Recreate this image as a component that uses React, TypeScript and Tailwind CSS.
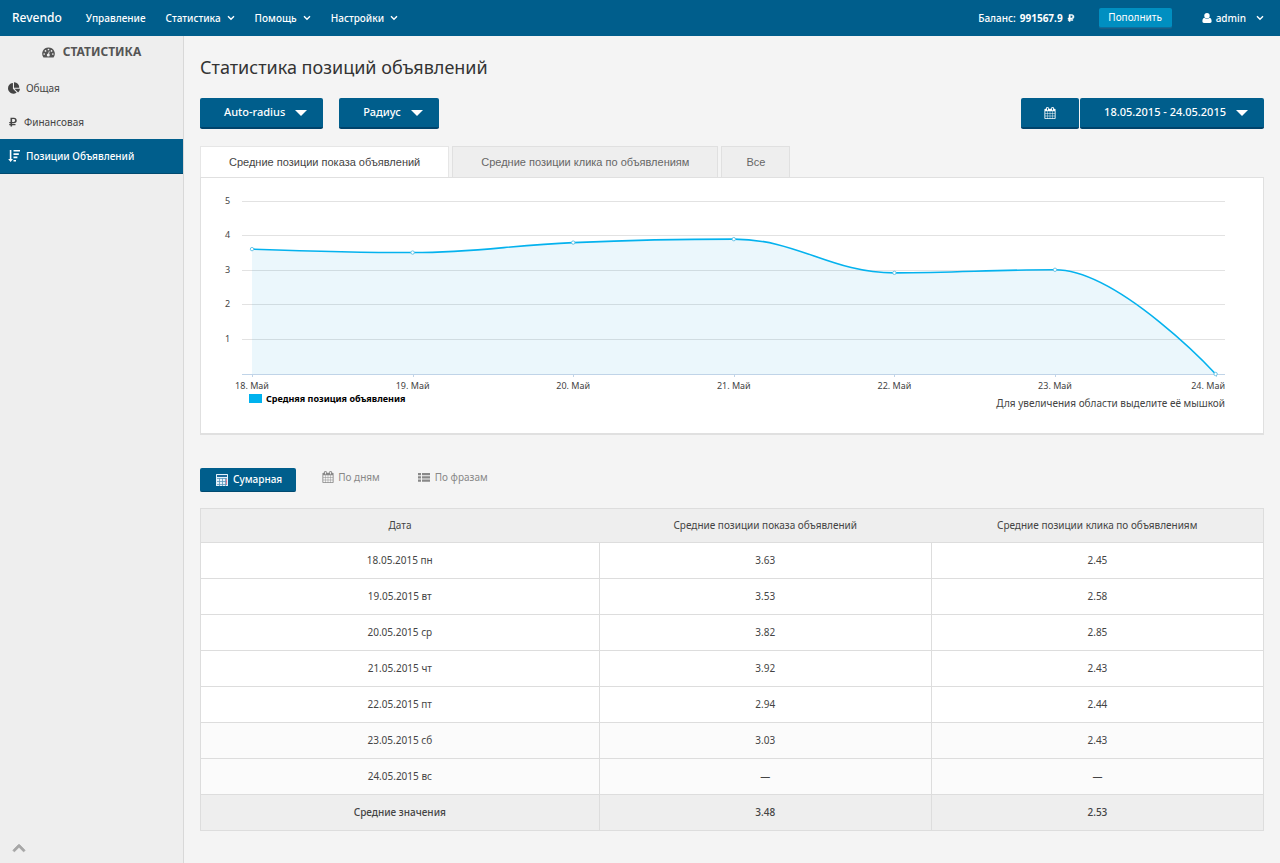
import type { ReactNode } from "react";
import { FaChartPie, FaChevronUp, FaRubleSign } from "react-icons/fa";

function ChevronIcon() {
  return (
    <svg viewBox="0 0 8 6" className="h-1.5 w-2" fill="none" stroke="currentColor" strokeWidth="1.4" aria-hidden="true">
      <path d="M1 1.2 4 4.2 7 1.2" />
    </svg>
  );
}

function CaretIcon() {
  return (
    <svg viewBox="0 0 12 6" className="h-1.5 w-3" fill="currentColor" aria-hidden="true">
      <path d="M0 0h12L6 6z" />
    </svg>
  );
}

function CalendarIcon({ className }: { className: string }) {
  return (
    <svg viewBox="0 0 1792 1792" className={className} fill="currentColor" aria-hidden="true">
      <path d="M192 1664h288v-288h-288v288zm352 0h320v-288h-320v288zm-352-352h288v-320h-288v320zm352 0h320v-320h-320v320zm-352-384h288v-288h-288v288zm736 736h320v-288h-320v288zm-384-736h320v-288h-320v288zm768 736h288v-288h-288v288zm-384-352h320v-320h-320v320zm-352-864v-288q0-13-9.5-22.5t-22.5-9.5h-64q-13 0-22.5 9.5t-9.5 22.5v288q0 13 9.5 22.5t22.5 9.5h64q13 0 22.5-9.5t9.5-22.5zm736 864h288v-320h-288v320zm-384-384h320v-288h-320v288zm384 0h288v-288h-288v288zm32-480v-288q0-13-9.5-22.5t-22.5-9.5h-64q-13 0-22.5 9.5t-9.5 22.5v288q0 13 9.5 22.5t22.5 9.5h64q13 0 22.5-9.5t9.5-22.5zm384-64v1280q0 52-38 90t-90 38h-1408q-52 0-90-38t-38-90v-1280q0-52 38-90t90-38h128v-96q0-66 47-113t113-47h64q66 0 113 47t47 113v96h384v-96q0-66 47-113t113-47h64q66 0 113 47t47 113v96h128q52 0 90 38t38 90z" />
    </svg>
  );
}

function CalculatorIcon() {
  return (
    <svg viewBox="0 0 12 12" className="size-3" aria-hidden="true">
      <rect width="12" height="12" rx="0.5" fill="#e4f1fa" />
      <rect x="1" y="1" width="10" height="2" fill="#1d6a9c" />
      <path d="M1 4.5h10M1 7.5h10M1 10.5h10M3.5 4v8M6.5 4v8M9.5 4v8" stroke="#5b98bd" strokeWidth="0.8" />
      <path d="M10.5 5v5.5" stroke="#e0607a" strokeWidth="0.8" />
    </svg>
  );
}

function DashboardIcon() {
  return (
    <svg viewBox="0 0 13 11" className="h-[11px] w-[13px]" aria-hidden="true">
      <path d="M6.5 0.5A6.2 6.2 0 0 0 1.3 10.2Q1.5 10.5 1.9 10.5H11.1Q11.5 10.5 11.7 10.2A6.2 6.2 0 0 0 6.5 0.5Z" fill="currentColor" />
      <g fill="#eee">
        <circle cx="2.2" cy="7" r="0.85" />
        <circle cx="3.5" cy="3.9" r="0.85" />
        <circle cx="6.5" cy="2.5" r="0.85" />
        <circle cx="9.5" cy="3.9" r="0.85" />
        <circle cx="10.8" cy="7" r="0.85" />
        <circle cx="6.3" cy="8" r="1.5" />
      </g>
      <path d="M6.4 7.6 7.3 4.4" stroke="#eee" strokeWidth="0.9" />
    </svg>
  );
}

function SortIcon() {
  return (
    <svg viewBox="0 0 12 12" className="size-3" fill="currentColor" aria-hidden="true">
      <path d="M1.8 0H3.4V9H5L2.6 12 0.2 9H1.8Z" />
      <path d="M5.5 0H12V1.6H5.5ZM5.5 3.3H10.8V4.9H5.5ZM5.5 6.6H9.4V8.2H5.5ZM5.5 9.9H8V11.5H5.5Z" />
    </svg>
  );
}

function UserIcon() {
  return (
    <svg viewBox="0 0 10 10" className="size-2.5" fill="currentColor" aria-hidden="true">
      <circle cx="5" cy="2.8" r="2.7" />
      <path d="M2.3 4.8C0.9 5.1 0.4 6.6 0.4 8.3 0.4 9.4 1 10 1.9 10H8.1C9 10 9.6 9.4 9.6 8.3 9.6 6.6 9.1 5.1 7.7 4.8 6.3 6.3 3.7 6.3 2.3 4.8Z" />
    </svg>
  );
}

function ListIcon() {
  return (
    <svg viewBox="0 0 12 9" className="h-[9px] w-3" fill="currentColor" aria-hidden="true">
      <path d="M0 0H3V2.2H0ZM4 0H12V2.2H4ZM0 3.3H3V5.5H0ZM4 3.3H12V5.5H4ZM0 6.6H3V8.8H0ZM4 6.6H12V8.8H4Z" />
    </svg>
  );
}

function Header() {
  return (
    <header className="flex h-9 items-center bg-[#005e8c] text-[10px] font-medium text-white">
      <a href="#" className="pl-3 text-xs">
        Revendo
      </a>
      <nav className="ml-6 flex items-center gap-5">
        <a href="#">Управление</a>
        {["Статистика", "Помощь", "Настройки"].map((label) => (
          <button key={label} type="button" className="flex items-center gap-1.5">
            {label}
            <ChevronIcon />
          </button>
        ))}
      </nav>
      <div className="ml-auto flex items-center pr-4">
        <span className="flex items-center gap-1">
          Баланс: <b>991567.9</b>
          <FaRubleSign className="size-2" strokeWidth="30" stroke="currentColor" />
        </span>
        <button
          type="button"
          className="ml-6 h-5 w-[73px] rounded-xs border-b border-[#0a6f9f] bg-[#008fc1] pb-px font-normal shadow-[0_1px_1px_#1d5f86]"
        >
          Пополнить
        </button>
        <button type="button" className="ml-[30px] flex items-center gap-1">
          <UserIcon />
          admin
          <span className="ml-1.5">
            <ChevronIcon />
          </span>
        </button>
      </div>
    </header>
  );
}

const menu: { label: string; icon: ReactNode; active?: boolean }[] = [
  { label: "Общая", icon: <FaChartPie className="size-3" /> },
  { label: "Финансовая", icon: <FaRubleSign className="size-2.5" /> },
  { label: "Позиции Объявлений", icon: <SortIcon />, active: true },
];

function Sidebar() {
  return (
    <aside className="flex w-46 shrink-0 flex-col border-r border-[#d8d8d8] bg-[#eee] text-[#444]">
      <h2 className="flex h-8 items-center justify-center gap-2 text-xs font-bold text-[#555]">
        <DashboardIcon />
        СТАТИСТИКА
      </h2>
      <nav className="mt-[3px] flex flex-col text-[10px]">
        {menu.map((item) => (
          <a
            key={item.label}
            href="#"
            className={
              item.active
                ? "flex h-[35px] items-center gap-1.5 border-b border-[#004a70] bg-[#005e8c] px-2 font-medium text-white"
                : "flex h-[34px] items-center gap-1.5 px-2"
            }
          >
            {item.icon}
            {item.label}
          </a>
        ))}
      </nav>
      <a href="#" aria-label="Наверх" className="mt-auto mb-2 ml-3 w-fit text-[#a6a6a6]">
        <FaChevronUp className="size-3.5" stroke="currentColor" strokeWidth="30" />
      </a>
    </aside>
  );
}

const buttonStyle =
  "flex h-[31px] items-center gap-2.5 rounded-xs border-b-2 border-[#00436b] bg-[#005e8c] text-[11px] font-medium text-white";

function Toolbar() {
  return (
    <div className="flex items-center">
      <button type="button" className={`${buttonStyle} pr-4 pl-6`}>
        Auto-radius
        <CaretIcon />
      </button>
      <button type="button" className={`${buttonStyle} ml-4 pr-4 pl-6`}>
        Радиус
        <CaretIcon />
      </button>
      <button type="button" aria-label="Календарь" className={`${buttonStyle} ml-auto w-[58px] justify-center`}>
        <CalendarIcon className="size-3" />
      </button>
      <button type="button" className={`${buttonStyle} ml-px pr-4 pl-6`}>
        18.05.2015 - 24.05.2015
        <CaretIcon />
      </button>
    </div>
  );
}

const points = [
  { label: "18. Май", value: 3.63 },
  { label: "19. Май", value: 3.53 },
  { label: "20. Май", value: 3.82 },
  { label: "21. Май", value: 3.92 },
  { label: "22. Май", value: 2.94 },
  { label: "23. Май", value: 3.03 },
  { label: "24. Май", value: 0 },
].map((point, i) => ({
  ...point,
  x: 51 + i * 160.6,
  y: 196 - point.value * 34.4,
}));

/* Cubic spline whose control points never overshoot the neighbouring values. */
function splinePath() {
  let path = `M${points[0].x} ${points[0].y}`;
  let outX = points[0].x;
  let outY = points[0].y;
  for (let i = 1; i < points.length; i++) {
    const { x, y } = points[i];
    const prev = points[i - 1];
    const next = points[i + 1];
    let inX = x;
    let inY = y;
    let nextX = x;
    let nextY = y;
    if (next) {
      inX = (1.5 * x + prev.x) / 2.5;
      inY = (1.5 * y + prev.y) / 2.5;
      nextX = (1.5 * x + next.x) / 2.5;
      nextY = (1.5 * y + next.y) / 2.5;
      const shift = ((nextY - inY) * (nextX - x)) / (nextX - inX) + y - nextY;
      inY += shift;
      nextY += shift;
      const clampedIn = Math.min(Math.max(inY, Math.min(prev.y, y)), Math.max(prev.y, y));
      if (clampedIn !== inY) {
        inY = clampedIn;
        nextY = 2 * y - inY;
      }
      const clampedNext = Math.min(Math.max(nextY, Math.min(next.y, y)), Math.max(next.y, y));
      if (clampedNext !== nextY) {
        nextY = clampedNext;
        inY = 2 * y - nextY;
      }
    }
    path += `C${outX} ${outY} ${inX} ${inY} ${x} ${y}`;
    outX = nextX;
    outY = nextY;
  }
  return path;
}

function Chart() {
  const line = splinePath();
  const last = points[points.length - 1];
  return (
    <svg viewBox="0 0 1062 214" className="h-auto w-full" role="img" aria-label="Средняя позиция объявления">
      {[1, 2, 3, 4, 5].map((n) => (
        <g key={n}>
          <path d={`M41 ${Math.round(196 - n * 34.4) - 0.5}H1024`} stroke="#e2e2e2" />
          <text x="24" y={Math.round(196 - n * 34.4) + 2} className="fill-[#444] text-[9px]">
            {n}
          </text>
        </g>
      ))}
      <path d={`${line}V196H${points[0].x}Z`} fill="#0096d8" fillOpacity="0.08" />
      <path d="M41 196.5H1024" stroke="#c0d4e8" />
      <path d={line} fill="none" stroke="#04b2ee" strokeWidth="1.6" shapeRendering="geometricPrecision" />
      {points.map((point) => (
        <g key={point.label}>
          <path d={`M${Math.round(point.x) + 0.5} 196v3`} stroke="#c0d4e8" />
          <circle cx={point.x} cy={point.y} r="1.7" fill="#fff" stroke="#5ec0e4" strokeWidth="0.9" />
          <text
            x={point === last ? 1024 : point.x}
            y="211"
            textAnchor={point === last ? "end" : "middle"}
            className="fill-[#444] text-[9px]"
          >
            {point.label}
          </text>
        </g>
      ))}
    </svg>
  );
}

const tabStyle = "h-[31px] border border-b-0 font-['Liberation_Sans',sans-serif] text-[11px]";

function ChartPanel() {
  return (
    <section className="mt-[17px]">
      <div role="tablist" className="flex gap-[3px]">
        <button
          type="button"
          role="tab"
          aria-selected="true"
          className={`${tabStyle} relative z-10 -mb-px h-8 border-[#e6e6e6] bg-white px-7 text-[#444]`}
        >
          Средние позиции показа объявлений
        </button>
        <button type="button" role="tab" aria-selected="false" className={`${tabStyle} border-[#e0e0e0] bg-[#eee] px-7 text-[#666]`}>
          Средние позиции клика по объявлениям
        </button>
        <button type="button" role="tab" aria-selected="false" className={`${tabStyle} border-[#e0e0e0] bg-[#eee] px-6 text-[#666]`}>
          Все
        </button>
      </div>
      <div className="border border-b-2 border-[#e0e0e0] bg-white pb-[22px]">
        <Chart />
        <div className="flex items-start justify-between pr-[38px] pl-12 text-[#444]">
          <div className="flex items-center gap-1 text-[9px] leading-[13px] font-bold text-black">
            <span className="h-[9px] w-[13px] bg-[#00b2ee]" />
            Средняя позиция объявления
          </div>
          <span className="pt-[3px] text-[10px] leading-4">Для увеличения области выделите её мышкой</span>
        </div>
      </div>
    </section>
  );
}

function ViewSwitch() {
  return (
    <div className="mt-[33px] flex items-center gap-[26px] text-[10px] text-[#888]">
      <button
        type="button"
        className="flex h-6 items-center gap-[5px] rounded-xs border-b border-[#004a70] bg-[#005e8c] pr-[14px] pl-4 font-medium text-white"
      >
        <CalculatorIcon />
        Сумарная
      </button>
      <button type="button" className="mb-1.5 flex items-center gap-1">
        <CalendarIcon className="size-3" />
        По дням
      </button>
      <button type="button" className="mb-1.5 ml-3 flex items-center gap-[5px]">
        <ListIcon />
        По фразам
      </button>
    </div>
  );
}

const rows = [
  ["18.05.2015 пн", "3.63", "2.45"],
  ["19.05.2015 вт", "3.53", "2.58"],
  ["20.05.2015 ср", "3.82", "2.85"],
  ["21.05.2015 чт", "3.92", "2.43"],
  ["22.05.2015 пт", "2.94", "2.44"],
  ["23.05.2015 сб", "3.03", "2.43"],
  ["24.05.2015 вс", "—", "—"],
];

function StatsTable() {
  return (
    <table className="mt-4 w-full table-fixed border-collapse border border-[#ddd] text-center text-[10px] text-[#444]">
      <thead>
        <tr className="h-[34px] bg-[#eee]">
          <th scope="col" className="w-3/8 font-normal">
            Дата
          </th>
          <th scope="col" className="font-normal">
            Средние позиции показа объявлений
          </th>
          <th scope="col" className="font-normal">
            Средние позиции клика по объявлениям
          </th>
        </tr>
      </thead>
      <tbody>
        {rows.map((row, i) => (
          <tr key={row[0]} className={i > 4 ? "h-9 bg-[#fbfbfb]" : "h-9 bg-white"}>
            {row.map((cell, j) => (
              <td key={j} className="border border-[#ddd]">
                {cell}
              </td>
            ))}
          </tr>
        ))}
      </tbody>
      <tfoot>
        <tr className="h-9 bg-[#eee] font-medium">
          <td className="border border-[#ddd]">Средние значения</td>
          <td className="border border-[#ddd]">3.48</td>
          <td className="border border-[#ddd]">2.53</td>
        </tr>
      </tfoot>
    </table>
  );
}

export default function App() {
  return (
    <div className="flex min-h-screen flex-col bg-[#f4f4f4] font-['Noto_Sans',sans-serif]">
      <Header />
      <div className="flex grow">
        <Sidebar />
        <main className="min-w-0 grow px-4 pt-4 pb-8">
          <h1 className="mb-4 text-lg leading-[30px] text-[#333]">Статистика позиций объявлений</h1>
          <Toolbar />
          <ChartPanel />
          <ViewSwitch />
          <StatsTable />
        </main>
      </div>
    </div>
  );
}
